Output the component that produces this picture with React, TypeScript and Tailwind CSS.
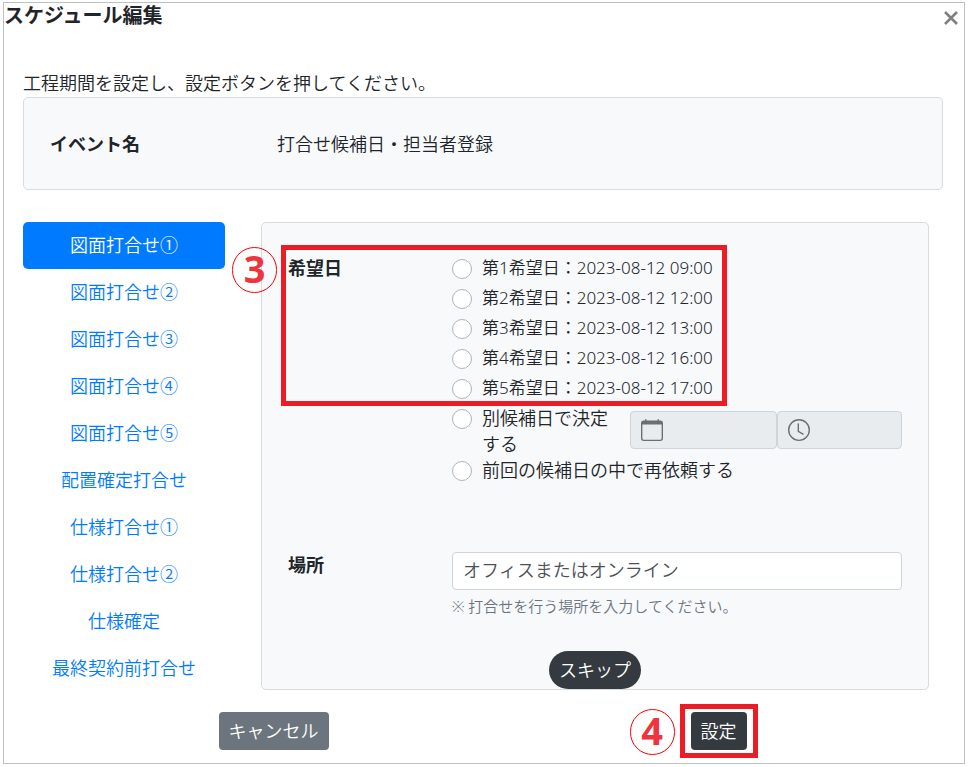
import { useState } from 'react';
import type { ReactNode } from 'react';
import clsx from 'clsx';
import { BsCalendar, BsClock } from 'react-icons/bs';

const TABS = [
  '図面打合せ①',
  '図面打合せ②',
  '図面打合せ③',
  '図面打合せ④',
  '図面打合せ⑤',
  '配置確定打合せ',
  '仕様打合せ①',
  '仕様打合せ②',
  '仕様確定',
  '最終契約前打合せ',
];

const CANDIDATES = [
  '第1希望日：2023-08-12 09:00',
  '第2希望日：2023-08-12 12:00',
  '第3希望日：2023-08-12 13:00',
  '第4希望日：2023-08-12 16:00',
  '第5希望日：2023-08-12 17:00',
];

type RadioProps = {
  value: string;
  checked: boolean;
  onSelect: (value: string) => void;
  className?: string;
  children: ReactNode;
};

function Radio({ value, checked, onSelect, className, children }: RadioProps) {
  return (
    <label className={clsx('flex items-start gap-2.5 leading-[26px]', className)}>
      <input
        type="radio"
        name="candidate"
        value={value}
        checked={checked}
        onChange={() => onSelect(value)}
        className="mt-1 h-5 w-5 shrink-0 appearance-none rounded-full border border-[#adb5bd] bg-white checked:border-[6px] checked:border-[#007bff]"
      />
      <span>{children}</span>
    </label>
  );
}

function StepBadge({ step, className }: { step: number; className: string }) {
  return (
    <span
      className={clsx(
        'absolute flex h-[46px] w-[45px] items-center justify-center rounded-full border border-[#f00] pb-1 text-[38px] leading-none font-bold text-[#ee343c]',
        className,
      )}
    >
      {step}
    </span>
  );
}

export default function App() {
  const [activeTab, setActiveTab] = useState(TABS[0]);
  const [selected, setSelected] = useState('');

  return (
    <div className="bg-white px-[3px] pt-0.5 pb-[3px] font-['Noto_Sans','Noto_Sans_CJK_JP',sans-serif] text-lg font-[350] text-[#212529]">
      <div className="border border-[#c0c0c0] pb-[13px]">
        <header className="flex items-start justify-between">
          <h1 className="text-xl leading-[26px] font-bold">スケジュール編集</h1>
          <button type="button" aria-label="閉じる" className="p-1.5 pt-2">
            <svg viewBox="0 0 14 14" className="h-3.5 w-3.5" stroke="#7f7f7f" strokeWidth="2.6">
              <path d="M1 1L13 13M13 1L1 13" />
            </svg>
          </button>
        </header>

        <main className="mt-[38px] mr-[21px] ml-[19px]">
          <p className="leading-7">工程期間を設定し、設定ボタンを押してください。</p>

          <dl className="flex h-[93px] items-center rounded-[5px] border border-[#d9dcdf] bg-[#f8f9fb] px-[26px]">
            <dt className="w-[227px] font-bold">イベント名</dt>
            <dd>打合せ候補日・担当者登録</dd>
          </dl>

          <div className="mt-8 mr-3.5 flex items-start gap-9">
            <nav className="flex w-[202px] shrink-0 flex-col">
              {TABS.map((tab) => (
                <button
                  key={tab}
                  type="button"
                  onClick={() => setActiveTab(tab)}
                  className={clsx(
                    'h-[47px] rounded-[5px] pb-0.5 text-center',
                    tab === activeTab ? 'bg-[#007bff] text-white' : 'text-[#007bff]',
                  )}
                >
                  {tab}
                </button>
              ))}
            </nav>

            <section className="relative flex-1 rounded-[5px] border border-[#d9dcdf] bg-[#f8f9fb] px-[26px] pt-8">
              <div className="flex">
                <h2 className="w-[164px] shrink-0 leading-[26px] font-bold">希望日</h2>
                <div className="flex-1">
                  {CANDIDATES.map((text) => (
                    <Radio
                      key={text}
                      value={text}
                      checked={selected === text}
                      onSelect={setSelected}
                      className="h-[30px] text-[17px]"
                    >
                      {text}
                    </Radio>
                  ))}
                  <div className="flex items-start gap-5">
                    <Radio
                      value="other"
                      checked={selected === 'other'}
                      onSelect={setSelected}
                      className="w-[158px] shrink-0"
                    >
                      別候補日で決定する
                    </Radio>
                    <div className="mt-1.5 flex flex-1">
                      <div className="flex h-[38px] min-w-0 flex-6 items-center rounded border border-[#ced4da] bg-[#e9ecef] pl-2.5">
                        <BsCalendar className="shrink-0 text-[22px] text-[#6c6f72]" />
                        <input
                          type="text"
                          aria-label="日付"
                          disabled
                          className="h-full w-full min-w-0 px-2"
                        />
                      </div>
                      <div className="flex h-[38px] min-w-0 flex-5 items-center rounded border border-[#ced4da] bg-[#e9ecef] pl-2.5">
                        <BsClock className="shrink-0 text-[22px] text-[#6c6f72]" />
                        <input
                          type="text"
                          aria-label="時刻"
                          disabled
                          className="h-full w-full min-w-0 px-2"
                        />
                      </div>
                    </div>
                  </div>
                  <Radio value="retry" checked={selected === 'retry'} onSelect={setSelected}>
                    前回の候補日の中で再依頼する
                  </Radio>
                </div>
              </div>

              <div className="mt-[69px] flex">
                <label htmlFor="place" className="w-[164px] shrink-0 leading-[26px] font-bold">
                  場所
                </label>
                <div className="flex-1">
                  <input
                    id="place"
                    type="text"
                    defaultValue="オフィスまたはオンライン"
                    className="h-[38px] w-full rounded border border-[#ced4da] bg-white px-2.5 pb-1 text-[#495057]"
                  />
                  <p className="mt-1 text-[15px] leading-6 text-[#6c757d]">
                    ※ 打合せを行う場所を入力してください。
                  </p>
                </div>
              </div>

              <div className="mt-[33px] flex justify-center">
                <button
                  type="button"
                  className="h-[38px] rounded-full bg-[#343a40] px-2.5 text-white"
                >
                  スキップ
                </button>
              </div>

              <div className="pointer-events-none absolute top-[22px] left-[19px] h-[161px] w-[446px] border-5 border-[#ed1c24]" />
              <StepBadge step={3} className="top-6 -left-[30px]" />
            </section>
          </div>

          <footer className="mt-5 grid grid-cols-2 justify-items-center pr-0.5 pl-7">
            <button type="button" className="h-[38px] rounded bg-[#6c757d] px-2.5 text-white">
              キャンセル
            </button>
            <div className="relative">
              <button type="button" className="h-[38px] rounded bg-[#343a40] px-2.5 text-white">
                設定
              </button>
              <div className="pointer-events-none absolute -inset-x-[11px] -inset-y-2 border-5 border-[#ed1c24]" />
              <StepBadge step={4} className="-top-[3px] -left-[61px]" />
            </div>
          </footer>
        </main>
      </div>
    </div>
  );
}
